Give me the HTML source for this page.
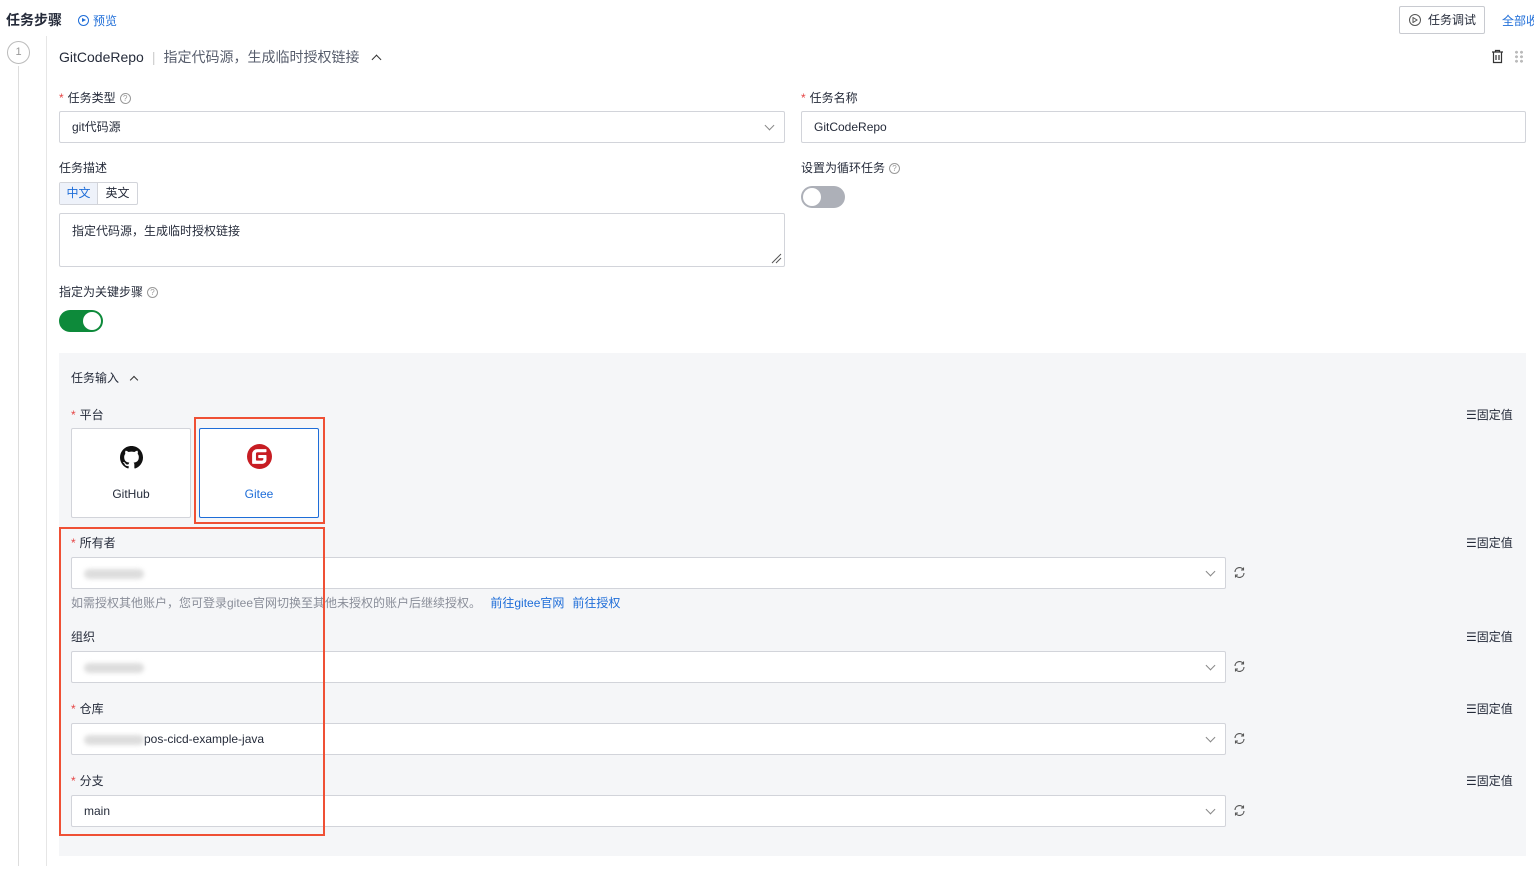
<!DOCTYPE html>
<html><head><meta charset="utf-8"><style>
*{box-sizing:border-box;margin:0;padding:0}
body{width:1534px;height:874px;background:#fff;font-family:"Liberation Sans","Noto Sans CJK SC",sans-serif;font-size:12px;color:#252b3a;position:relative;overflow:hidden}
.a{position:absolute;white-space:nowrap}
.req{color:#e54545;margin-right:4px}
.inp{position:absolute;background:#fff;border:1px solid #d2d4da;border-radius:2px;height:32px;padding:0 12px;line-height:30px;font-size:12px}
.chev{position:absolute;right:11px;top:10px;width:7px;height:7px;border-right:1px solid #888;border-bottom:1px solid #888;transform:rotate(45deg)}
.q{display:inline-block;width:11px;height:11px;border:1px solid #999;border-radius:50%;font-size:8px;line-height:9px;text-align:center;color:#999;margin-left:4px;vertical-align:1px}
.fix{position:absolute;left:1466px;font-size:12px;color:#252b3a;white-space:nowrap}
.ref{position:absolute;left:1233px}
.blur{display:inline-block;width:60px;height:10px;background:#ddd;border-radius:5px;filter:blur(2px);vertical-align:middle}
.red{position:absolute;border:2px solid #ef5035}
</style></head><body>
<div class="a" style="left:6px;top:10px;font-size:14px;font-weight:bold;color:#252b3a">任务步骤</div>
<div class="a" style="left:78px;top:12px;color:#1e6dd8;font-size:12px"><span style="display:inline-block;width:11px;height:11px;border:1.2px solid #1e6dd8;border-radius:50%;vertical-align:-1px;margin-right:4px;position:relative"><span style="position:absolute;left:3px;top:2px;border-left:4px solid #1e6dd8;border-top:2.5px solid transparent;border-bottom:2.5px solid transparent"></span></span>预览</div>
<div class="a" style="left:1399px;top:6px;width:86px;height:28px;border:1px solid #c8cad0;border-radius:2px;line-height:26px;padding-left:28px;font-size:12px">任务调试<span style="position:absolute;left:9px;top:7px;width:12px;height:12px;border:1px solid #555;border-radius:50%"><span style="position:absolute;left:3.5px;top:2.5px;border-left:4px solid transparent;border-top:2.5px solid transparent;border-bottom:2.5px solid transparent;outline:none;box-shadow:none"></span></span><svg style="position:absolute;left:12px;top:10px" width="6" height="6" viewBox="0 0 6 6"><path d="M1 0.5L5 3L1 5.5Z" fill="none" stroke="#555" stroke-width="1"/></svg></div>
<div class="a" style="left:1502px;top:12px;color:#1e6dd8">全部收</div>
<div class="a" style="left:7px;top:41px;width:23px;height:23px;border:1px solid #bbb;border-radius:50%;text-align:center;line-height:21px;color:#999;font-size:11px">1</div>
<div class="a" style="left:18px;top:66px;width:1px;height:800px;background:#ddd"></div>
<div class="a" style="left:46px;top:36px;width:1px;height:830px;background:#e6e6e6"></div>
<div class="a" style="left:59px;top:47px;font-size:14px">GitCodeRepo<span style="color:#ccc;margin:0 8px">|</span><span style="color:#575d6c">指定代码源，生成临时授权链接</span><span style="display:inline-block;width:7px;height:7px;border-left:1.3px solid #333;border-top:1.3px solid #333;transform:rotate(45deg);margin-left:14px;vertical-align:-1px"></span></div>
<svg class="a" style="left:1491px;top:49px" width="13" height="15" viewBox="0 0 13 15"><path d="M1 3H12M4.5 3V1.5H8.5V3M2.5 3V13.5H10.5V3M5 6V11M8 6V11" fill="none" stroke="#333" stroke-width="1.2"/></svg>
<div class="a" style="left:1514px;top:50px;width:10px;height:13px;background:radial-gradient(circle,#bbb 1.4px,transparent 1.6px) 0 0/5px 4.5px"></div>

<div class="a" style="left:59px;top:89px"><span class="req">*</span>任务类型<span class="q">?</span></div>
<div class="inp" style="left:59px;top:111px;width:726px">git代码源<span class="chev"></span></div>
<div class="a" style="left:801px;top:89px"><span class="req">*</span>任务名称</div>
<div class="inp" style="left:801px;top:111px;width:725px">GitCodeRepo</div>
<div class="a" style="left:59px;top:159px">任务描述</div>
<div class="a" style="left:59px;top:182px;width:79px;height:23px;border:1px solid #d2d4da;border-radius:2px"><span class="a" style="left:0;top:0;width:38px;height:21px;background:#eef2fa;border-right:1px solid #d2d4da;color:#1e6dd8;text-align:center;line-height:21px">中文</span><span class="a" style="left:38px;top:0;width:39px;text-align:center;line-height:21px">英文</span></div>
<div class="a" style="left:59px;top:213px;width:726px;height:54px;border:1px solid #d2d4da;border-radius:2px;padding:8px 12px">指定代码源，生成临时授权链接
<svg style="position:absolute;right:2px;bottom:2px" width="12" height="12"><path d="M2 11L11 2M6 11L11 6" stroke="#555" stroke-width="1"/></svg></div>
<div class="a" style="left:801px;top:159px">设置为循环任务<span class="q">?</span></div>
<div class="a" style="left:801px;top:186px;width:44px;height:22px;border-radius:11px;background:#adb0b8"><span class="a" style="left:2px;top:2px;width:18px;height:18px;border-radius:50%;background:#fff"></span></div>
<div class="a" style="left:59px;top:283px">指定为关键步骤<span class="q">?</span></div>
<div class="a" style="left:59px;top:310px;width:44px;height:22px;border-radius:11px;background:#0d8a3a"><span class="a" style="left:24px;top:2px;width:18px;height:18px;border-radius:50%;background:#fff"></span></div>

<div class="a" style="left:59px;top:353px;width:1467px;height:503px;background:#f5f6f8"></div>
<div class="a" style="left:71px;top:369px">任务输入<span style="display:inline-block;width:6px;height:6px;border-left:1.2px solid #333;border-top:1.2px solid #333;transform:rotate(45deg);margin-left:12px;vertical-align:-1px"></span></div>
<div class="a" style="left:71px;top:406px"><span class="req">*</span>平台</div>
<div class="fix" style="top:406px">☰固定值</div>
<div class="a" style="left:71px;top:428px;width:120px;height:90px;background:#fff;border:1px solid #d2d4da;border-radius:2px;text-align:center;padding-top:58px">GitHub
<svg class="a" style="left:48px;top:17px" width="23" height="23" viewBox="0 0 16 16"><path fill="#111" d="M8 0C3.58 0 0 3.58 0 8c0 3.540 2.290 6.530 5.470 7.590.4.07.55-.17.55-.38v-1.33c-2.23.48-2.7-1.07-2.7-1.07-.36-.92-.89-1.17-.89-1.17-.73-.5.05-.49.05-.49.8.06 1.23.83 1.23.83.71 1.22 1.87.87 2.33.66.07-.52.28-.87.5-1.070-1.78-.2-3.64-.89-3.64-3.95 0-.87.31-1.59.82-2.15-.08-.2-.36-1.02.08-2.12 0 0 .67-.21 2.2.82a7.6 7.6 0 014 0c1.53-1.04 2.2-.82 2.2-.82.44 1.1.16 1.92.08 2.12.51.56.82 1.27.82 2.15 0 3.07-1.87 3.75-3.65 3.95.29.25.54.73.54 1.48v2.2c0 .21.15.46.55.38A8 8 0 0016 8c0-4.42-3.58-8-8-8z"/></svg></div>
<div class="a" style="left:199px;top:428px;width:120px;height:90px;background:#fff;border:1px solid #1e6dd8;border-radius:2px;text-align:center;padding-top:58px;color:#1e6dd8">Gitee
<svg class="a" style="left:47px;top:15px" width="25" height="25" viewBox="0 0 24 24"><circle cx="12" cy="12" r="12" fill="#c71d23"/><path fill="#fff" d="M18 10.5h-6.5a.7.7 0 00-.7.7v1.6c0 .4.3.7.7.7h4.2v.8a1.6 1.6 0 01-1.6 1.6h-4.8a.7.7 0 01-.7-.7V9.5a1.6 1.6 0 011.6-1.6H18a.7.7 0 00.7-.7V5.6a.7.7 0 00-.7-.7H9.7A4.9 4.9 0 004.9 9.8v8.6c0 .4.3.7.7.7h9.1a4 4 0 004-4v-3.900a.7.7 0 00-.7-.7z"/></svg></div>

<div class="a" style="left:71px;top:534px"><span class="req">*</span>所有者</div>
<div class="fix" style="top:534px">☰固定值</div>
<div class="inp" style="left:71px;top:557px;width:1155px"><span class="blur"></span><span class="chev"></span></div>
<svg class="ref" style="top:566px" width="13" height="13" viewBox="0 0 13 13"><path d="M2 6A4.5 4.5 0 0 1 10.5 4M11 7A4.5 4.5 0 0 1 2.5 9M10.5 1.5V4H8M2.5 11.5V9H5" fill="none" stroke="#555" stroke-width="1.1"/></svg>
<div class="a" style="left:71px;top:594px;color:#8a8e99">如需授权其他账户，您可登录gitee官网切换至其他未授权的账户后继续授权。 <span style="color:#1e6dd8;margin-left:6px">前往gitee官网</span><span style="color:#1e6dd8;margin-left:8px">前往授权</span></div>
<div class="a" style="left:71px;top:628px">组织</div>
<div class="fix" style="top:628px">☰固定值</div>
<div class="inp" style="left:71px;top:651px;width:1155px"><span class="blur"></span><span class="chev"></span></div>
<svg class="ref" style="top:660px" width="13" height="13" viewBox="0 0 13 13"><path d="M2 6A4.5 4.5 0 0 1 10.5 4M11 7A4.5 4.5 0 0 1 2.5 9M10.5 1.5V4H8M2.5 11.5V9H5" fill="none" stroke="#555" stroke-width="1.1"/></svg>
<div class="a" style="left:71px;top:700px"><span class="req">*</span>仓库</div>
<div class="fix" style="top:700px">☰固定值</div>
<div class="inp" style="left:71px;top:723px;width:1155px"><span class="blur"></span>pos-cicd-example-java<span class="chev"></span></div>
<svg class="ref" style="top:732px" width="13" height="13" viewBox="0 0 13 13"><path d="M2 6A4.5 4.5 0 0 1 10.5 4M11 7A4.5 4.5 0 0 1 2.5 9M10.5 1.5V4H8M2.5 11.5V9H5" fill="none" stroke="#555" stroke-width="1.1"/></svg>
<div class="a" style="left:71px;top:772px"><span class="req">*</span>分支</div>
<div class="fix" style="top:772px">☰固定值</div>
<div class="inp" style="left:71px;top:795px;width:1155px">main<span class="chev"></span></div>
<svg class="ref" style="top:804px" width="13" height="13" viewBox="0 0 13 13"><path d="M2 6A4.5 4.5 0 0 1 10.5 4M11 7A4.5 4.5 0 0 1 2.5 9M10.5 1.5V4H8M2.5 11.5V9H5" fill="none" stroke="#555" stroke-width="1.1"/></svg>

<div class="red" style="left:194px;top:417px;width:131px;height:107px"></div>
<div class="red" style="left:59px;top:527px;width:266px;height:309px"></div>
</body></html>
